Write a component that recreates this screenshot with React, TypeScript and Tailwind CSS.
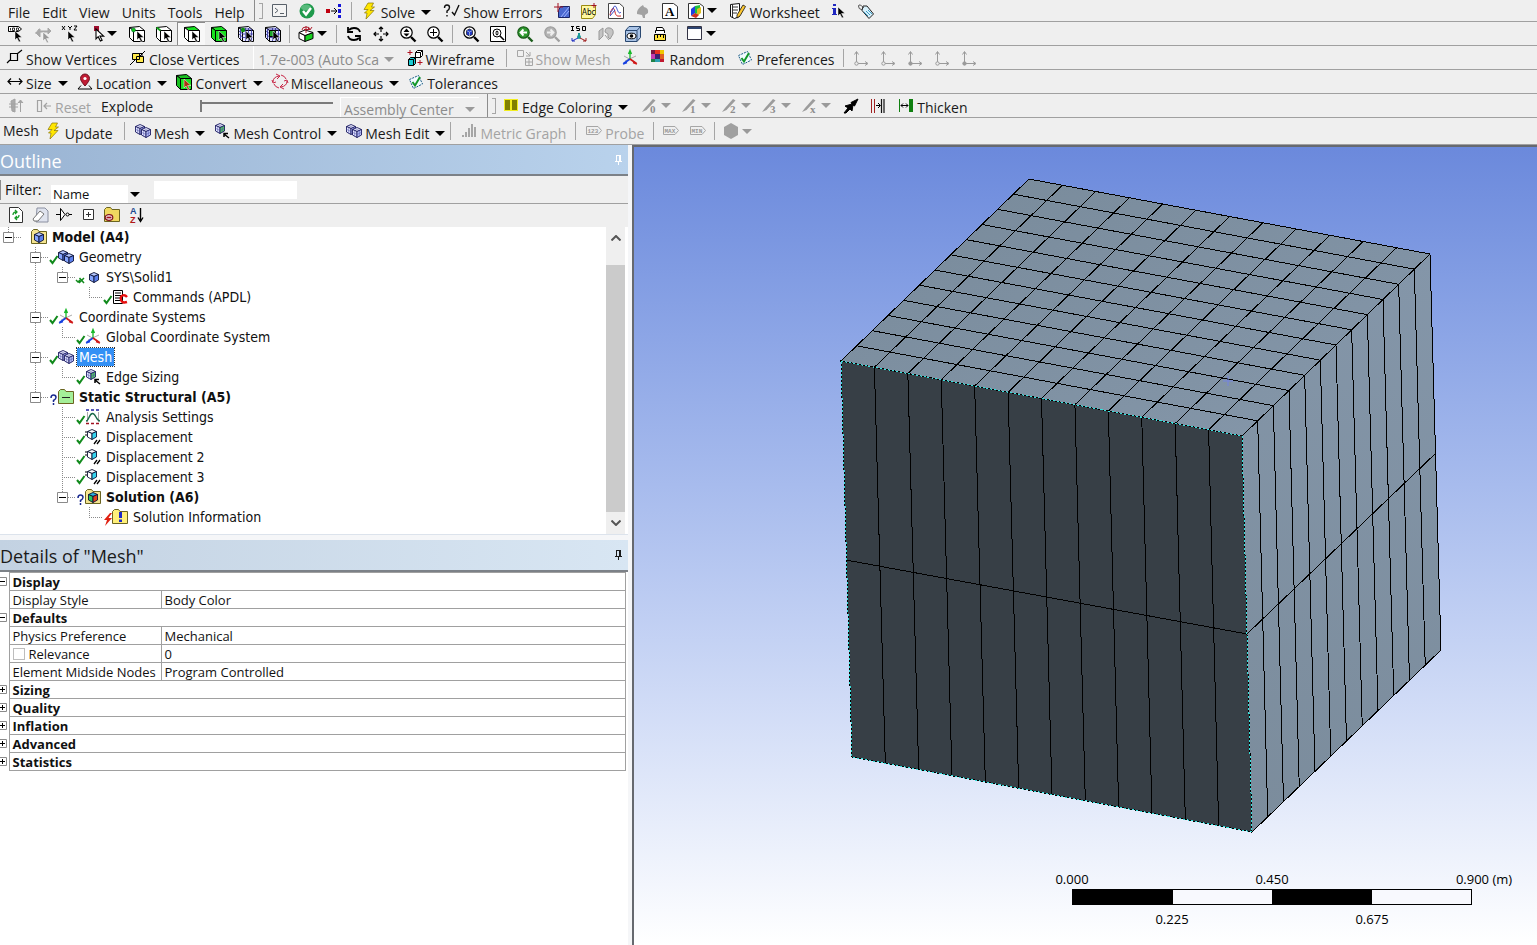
import React from 'react';
import clsx from 'clsx';

const CURSOR = 'M0 0v9l2-2 2 4 1.6-.8-2-3.7H7z';

const Cursor = ({ x, y, fill = '#000' }: { x: number; y: number; fill?: string }) => (
  <path d={CURSOR} transform={`translate(${x} ${y})`} fill={fill} stroke="#fff" strokeWidth=".5" />
);

interface CubeProps {
  x?: number;
  y?: number;
  front?: string;
  side?: string;
  top?: string;
  mesh?: boolean;
}

// Small isometric cube, 10x11 units
const MiniCube = ({ x = 0, y = 0, front = '#86a6ff', side = '#5b7fec', top = '#b5c8ff', mesh }: CubeProps) => (
  <g transform={`translate(${x} ${y})`} stroke={mesh ? '#1c1c60' : '#0c1236'} strokeWidth=".9" strokeLinejoin="round">
    <path d="M.5 2.500 5 .5l4.500 2L5 4.500z" fill={top} />
    <path d="M.5 2.500v5.500L5 10.500v-6z" fill={front} />
    <path d="M9.500 2.500v5.500L5 10.500v-6z" fill={side} />
    {mesh && <path d="M2.700 3.500v6M7.300 3.500v6M.5 5.300 5 7.500l4.500-2.200M2.700 1.500l4.600 2" stroke="#4a4aa8" strokeWidth=".5" fill="none" />}
  </g>
);

// Box seen from the front, used by the selection filters
const SelBox = ({ face = '#fff', edge = '#fff', side = edge, grid }: { face?: string; edge?: string; side?: string; grid?: boolean }) => (
  <g strokeLinejoin="round">
    <path d="M.5 1.500 10.500.5l5 4h-11z" fill={edge} stroke="#000" />
    <path d="M.5 1.500v10l4 4v-11z" fill={side} stroke="#000" />
    <path d="M4.500 4.500h11v11h-11z" fill={face} stroke="#000" />
    {grid && (
      <path d="M7.500 2v13M10.500 2v13M13.500 3v12M1 5l4 3h10M1 8l4 3.500h10M3 3h10M2.500 3v10" stroke="#2c2c9c" strokeWidth=".8" fill="none" />
    )}
  </g>
);

const Lens = ({ stroke = '#000', fill = '#fff' }: { stroke?: string; fill?: string }) => (
  <g>
    <circle cx="6.500" cy="6.500" r="5.700" fill={fill} stroke={stroke} strokeWidth="1.200" />
    <path d="m11 11 4.500 4.500" stroke={stroke} strokeWidth="2.400" />
  </g>
);

const Bolt = () => <path d="M6 0 2 6.500h4L2.500 10H5l-1 6 8-8.500H8L12.500 4H9.500L11.500 0z" fill="#ffe600" stroke="#8a7600" strokeWidth=".7" />;

const Triad = () => (
  <g strokeWidth="1.300" fill="none">
    <path d="m2 6 11 6M14 6 3 11" stroke="#888" strokeWidth=".7" />
    <path d="M8 9V1M6.500 4 8 .5 9.500 4" stroke="#18b828" />
    <path d="m8 9-6.500 4.500M1 14l4-1.500" stroke="#1640e0" strokeWidth="1.600" />
    <path d="m8 9 6.500 4.500M11 12.500l4 1.500" stroke="#d01818" strokeWidth="1.600" />
  </g>
);

const Folder = ({ fill = '#f4e490' }: { fill?: string }) => (
  <path d="M.5 14.500v-12l2-2h4l1.500 2h7.500v12z" fill={fill} stroke="#6b6420" />
);

const Check = () => (
  <g>
    <path d="m1.500 5.500 9-4 4 8.500-9 4.500z" fill="#f2fbff" stroke="#1b5c86" strokeDasharray="2 1" />
    <path d="m4.500 8 2.500 3.500L12 3" stroke="#12972a" strokeWidth="2" fill="none" />
  </g>
);

const MeshPair = () => (
  <g>
    <MiniCube x={0} y={1} mesh front="#e4e8ff" side="#b9c2f6" top="#f2f4ff" />
    <MiniCube x={6} y={4} mesh front="#e4e8ff" side="#b9c2f6" top="#f2f4ff" />
  </g>
);

const Slanted = ({ label }: { label: string }) => (
  <g>
    <path d="m0 14 3-4 8-9 2.500 1.500L4.500 12z" fill="#9c9c9c" />
    <text x="8" y="15" fontSize="11" fontFamily="Liberation Serif, serif" fontWeight="700" fill="#8e8e8e">{label}</text>
  </g>
);

const Axis = ({ filled }: { filled?: boolean }) => (
  <g stroke="#9a9a9a" fill="none">
    <path d="M3.500 13V2M1.500 4.500l2-3 2 3M4 13.500h10M12 11.500l3 2-3 2" />
    <circle cx="3.500" cy="13.500" r="1.700" fill={filled ? '#9a9a9a' : '#efefef'} />
  </g>
);

const Tag = ({ label }: { label: string }) => (
  <g>
    <path d="M.5 3.500H12l3.500 4-3.500 4H.5z" fill="none" stroke="#a6a6a6" />
    <text x="1.500" y="10" fontSize="6" fontFamily="Liberation Mono, monospace" fontWeight="700" fill="#999">{label}</text>
  </g>
);

const Displace = () => (
  <g>
    <MiniCube x={2} y={0} front="#fff" side="#35d4ee" top="#fff" />
    <path d="m9 15 3-4M12 15l3-4" stroke="#000" strokeWidth="1.300" />
    <path d="M0 3h2M0 6h2" stroke="#000" />
  </g>
);

const ICONS = {
  console: <path d="M.5 1.500h14v12H.5zM3 5l3 2.500L3 10M8 10.500h4" fill="#f4f4f4" stroke="#59616a" />,
  ok: (
    <g>
      <circle cx="8" cy="8" r="7.500" fill="#1f9a4c" />
      <ellipse cx="7" cy="4.500" rx="5" ry="3" fill="#7fd19c" opacity=".6" />
      <path d="m4 8 3 3.500L12 5" stroke="#fff" strokeWidth="2.400" fill="none" />
    </g>
  ),
  distribute: (
    <g>
      <path d="M0 6h4v4H0z" fill="#c00010" />
      <path d="M5 8h6M8 5l3 3-3 3" stroke="#000" fill="none" />
      <path d="M12 1h3v3h-3zM12 6h3v4h-3zM12 12h3v3h-3z" fill="#1515d8" />
    </g>
  ),
  bolt: <Bolt />,
  errors: (
    <g fill="none" stroke="#111" strokeWidth="1.400">
      <path d="M.5 5q0-3 2.500-3t2.500 2.500Q5.500 6.500 3 8v2M3 12v1.500M8 9l2.500 3L15 2" />
    </g>
  ),
  section: (
    <g>
      <path d="M6.500 3.500h9v11h-11v-7z" fill="#4a68d0" stroke="#1a2466" />
      <path d="m10 14 5-6M7 14l8-10" stroke="#9fb4ff" />
      <path d="M4 0v9M0 4h9" stroke="#a01020" />
    </g>
  ),
  abc: (
    <g>
      <path d="M.5 2.500h14v9l-3 4H.5z" fill="#fff8a0" stroke="#9a8a10" />
      <text x="1" y="12" fontSize="8" fontFamily="DejaVu Sans Condensed, sans-serif">Abc</text>
      <path d="M13 0v5M10.500 2.500h5" stroke="#a01020" />
    </g>
  ),
  chart: (
    <g fill="none">
      <path d="M.5.5h11l4 3.500v11.500H.5z" fill="#fff" stroke="#444" />
      <path d="M2 12c2-9 4-8 5-3s3 4 6 4" stroke="#d02020" />
      <path d="M2 9c3 0 3-6 5-6s3 10 6 6M2 13 7 7" stroke="#3848c8" />
    </g>
  ),
  leaf: <path d="M2 9q1-4 6-7l1 2q5 1 4 6l-3 2v3H8l-1-3-5-1z" fill="#a2a2a2" />,
  letterA: (
    <g>
      <path d="M.5.5h11l4 3v12H.5z" fill="#fff" stroke="#333" />
      <text x="3" y="13" fontSize="13" fontFamily="Liberation Serif, serif" fontWeight="700">A</text>
    </g>
  ),
  picture: (
    <g>
      <path d="M.5.5h11l4 3v12H.5z" fill="#fff" stroke="#333" />
      <path d="M3 6 7 3v7l-4 3z" fill="#2040e0" />
      <path d="m7 3 5-1v8l-5 1z" fill="#20c040" />
      <path d="m9 6 4-2v6l-4 3z" fill="#e0c020" />
      <path d="m3 13 4-3 4 2-3 3z" fill="#d03020" />
    </g>
  ),
  worksheet: (
    <g>
      <path d="M.5 1.500 9.500.5v13l-5 2-4-2z" fill="#fff" stroke="#111" />
      <path d="M3 4h5M3 7h5M3 10h4M2.500 1v13" stroke="#333" />
      <path d="m7 12 6-10 2.500 1.500L10 13l-3 2z" fill="#ffc830" stroke="#111" strokeWidth=".8" />
    </g>
  ),
  info: (
    <g>
      <path d="M2 1h3v2H2zM1 5h4v6h1v1H1v-1h1V6H1z" fill="#2028c0" />
      <Cursor x={7} y={4} />
    </g>
  ),
  tag: (
    <g>
      <path d="m5 3 4 0 6.500 8-4.500 4.500-7-8z" fill="#d6f0fb" stroke="#222" />
      <path d="M8 8l4 4M10 7l4 4M6 9l4 4" stroke="#3d9cc4" />
      <path d="M6 5Q1 0 .5 3t4 4" fill="none" stroke="#555" />
    </g>
  ),
  label: (
    <g>
      <path d="M.5.5h10l3 2.500-3 2.500H.5z" fill="#fff" stroke="#000" />
      <path d="M2.500 2v2.500M4.500 2h2v2.500h-2zM8.500 2h2v2.500h-2z" stroke="#000" fill="none" strokeWidth=".8" />
      <Cursor x={7} y={5} />
    </g>
  ),
  arrowsGray: (
    <g>
      <path d="M0 7h4M4 3 1 7l4 4V3zM5 5h8V2l3 3-3 3V6H5z" stroke="#a8a8a8" fill="#a8a8a8" />
      <Cursor x={8} y={6} fill="#999" />
    </g>
  ),
  xyz: (
    <g>
      <path d="m0 0 3 4M3 0 0 4M6 0l2 2 2-2M8 2v2M12 0h3l-3 4h3" stroke="#000" fill="none" />
      <Cursor x={6} y={5} />
    </g>
  ),
  pointer: (
    <g>
      <path d="M6 0h5v5H6z" fill="#a01030" />
      <path d={CURSOR} transform="translate(8 3) scale(1.100)" fill="#fff" stroke="#000" />
    </g>
  ),
  selVertex: <g><SelBox /><circle cx="4.500" cy="4" r="2" fill="#12c81c" stroke="#053" strokeWidth=".5" /><Cursor x={8} y={5} /></g>,
  selEdge: <g><SelBox /><path d="M.5 1.500 4.500 4.500" stroke="#12a01c" strokeWidth="2" /><Cursor x={8} y={5} /></g>,
  selFace: <g><SelBox edge="#18e020" side="#fff" /><Cursor x={8} y={5} /></g>,
  selBody: <g><SelBox face="#18e020" edge="#18e020" /><Cursor x={8} y={5} /></g>,
  selNode: <g><SelBox grid face="#e8eaff" edge="#e8eaff" /><circle cx="5" cy="4" r="2.200" fill="#109010" /><Cursor x={8} y={5} /></g>,
  selElem: <g><SelBox grid face="#dfe3ff" edge="#dfe3ff" /><path d="M4.500 4.500h6v6h-6z" fill="#18a828" stroke="#000" /><Cursor x={8} y={5} /></g>,
  extend: (
    <g>
      <path d="m7 9.500-6-3v6l6 3z" fill="#fff" stroke="#000" />
      <path d="m7 9.500 8-3v6l-8 3z" fill="#18d020" stroke="#000" />
      <path d="M1 6.500 7 4l8 2.500-8 3z" fill="#fff" stroke="#000" />
      <path d="M4 4Q4 1 8 1t4 2M10 2l2 2 2-3M8 0v7M6 3.500h5" stroke="#b02030" fill="none" />
    </g>
  ),
  rotate: <path d="M14 6Q13 2 8 2 5 2 3 4M2 1v5h5M2 10q1 4 6 4 3 0 5-2M14 15v-5H9" fill="none" stroke="#000" strokeWidth="1.800" />,
  pan: <path d="M8 1v5M8 10v5M1 8h5M10 8h5M6 3l2-2 2 2M6 13l2 2 2-2M3 6 1 8l2 2M13 6l2 2-2 2" fill="none" stroke="#000" strokeWidth="1.200" />,
  zoomDrag: <g><Lens /><path d="m3.500 6 3-3.500 3 3.500zM3.500 7.500l3 3 3-3z" /></g>,
  zoomIn: <g><Lens /><path d="M6.500 3v7M3 6.500h7" stroke="#000" /></g>,
  zoomFit: <g><Lens /><path d="M3.500 4.500 6.500 3l3 1.500v4l-3 1.500-3-1.500z" fill="#2038c8" stroke="#000" strokeWidth=".6" /><path d="M3.500 4.500l3 1.500 3-1.500M6.500 6v4" stroke="#bcd" strokeWidth=".7" fill="none" /></g>,
  zoomBox: (
    <g>
      <path d="M.5.5h15v15H.5z" fill="#fff" stroke="#000" />
      <circle cx="7" cy="7" r="4" fill="none" stroke="#000" />
      <path d="m10 10 4 4" stroke="#000" strokeWidth="1.600" />
      <path d="m5 6.500 2-2 2 2zM5 7.500l2 2 2-2z" />
    </g>
  ),
  zoomPrev: <g><Lens fill="#2f9a2f" stroke="#1a5c1a" /><path d="M10 6.500H4M6.500 3.500l-3 3 3 3" stroke="#fff" strokeWidth="1.800" fill="none" /></g>,
  zoomNext: <g><Lens fill="#b4b4b4" stroke="#a0a0a0" /><path d="M3 6.500h6M6.500 3.500l3 3-3 3" stroke="#eee" strokeWidth="1.800" fill="none" /></g>,
  iso: (
    <g>
      <path d="M0 .5h3M1.500 0v5M0 4.500h3M8.500.5H5.500v2h3v2h-3M11.500.5h3v4h-3z" stroke="#000" fill="none" />
      <path d="M8 7v5" stroke="#1a9a9a" strokeWidth="2" />
      <circle cx="8" cy="11" r="2" fill="#1a9a9a" />
      <path d="m7 12-6 3M1 12v3h3" stroke="#2030c0" fill="none" />
      <path d="m9 12 6 3M15 12v3h-3" stroke="#a02020" fill="none" />
    </g>
  ),
  lookAt: <path d="M1 5 5 2v8l-4 4zM7 6q0-5 5-4 4 1 3 6l-3 5-2-2V8z M7 9l4 5" fill="#c4c4c4" stroke="#999" />,
  eyeBox: (
    <g>
      <path d="M.5 4.500 4 .5h11.500v11l-3.500 4H.5z" fill="#a9c3e6" stroke="#2a4870" />
      <path d="M.5 4.500H12v11M12 4.500 15.500.5" fill="none" stroke="#2a4870" />
      <ellipse cx="6.500" cy="10" rx="4.500" ry="2.800" fill="#fff" stroke="#000" />
      <circle cx="6.500" cy="10" r="1.800" />
    </g>
  ),
  ruler: (
    <g>
      <path d="M2.500 8.500h11v6h-11z" fill="#ffe23a" stroke="#000" />
      <path d="M5.500 9v3M8.500 9v2M11.500 9v3" stroke="#000" />
      <path d="M3.500 7V4.500h9V7M4.500 4V1.500h6l2 3" fill="#fff" stroke="#000" />
    </g>
  ),
  window: <g><path d="M.5.5h14v13H.5z" fill="#fff" stroke="#334" /><path d="M1 1h13v2H1z" fill="#2d4470" /></g>,
  showVertices: <path d="M3.500 3.500h7v7h-7zM10 4l5-4M0 13l3-3" fill="none" stroke="#000" strokeWidth="1.200" />,
  closeVertices: (
    <g>
      <path d="M2.500 3.500h7v6h-7zM6.500 6.500h7v6h-7z" fill="#ffe94a" stroke="#000" />
      <path d="M9 7 15 1M0 15l7-7M6 3.500h6v3" stroke="#000" fill="none" />
    </g>
  ),
  wireframe: (
    <g>
      <path d="M8.500 2.500h5v5h-5zM8.500 2.500l2-2h5v5l-2 2M13.500 2.500l2-2" fill="#fff" stroke="#000" />
      <path d="M1.500 9.500h5v6h-5zM1.500 9.500l2-2h5v6l-2 2M6.500 9.500l2-2" fill="#19cbd4" stroke="#000" />
      <path d="M3 0v5M.5 2.500h5M13 10v5M10.500 12.500h5" stroke="#b01020" />
    </g>
  ),
  showMesh: <path d="M.5.5h6v6h-6zM9 2l4 4M13 2v4H9M8.500 8.500h7v7h-7zM12 9v6M9 12h6" fill="none" stroke="#a6a6a6" />,
  triad: <Triad />,
  random: (
    <g>
      <path d="M1 0h4v4H1z" fill="#7a1440" /><path d="M5 0h5v4H5z" fill="#e83020" /><path d="M10 0h4v4h-4z" fill="#f0c800" />
      <path d="M1 4h4v5H1z" fill="#c83cb0" /><path d="M5 4h5v5H5z" fill="#402070" /><path d="M10 4h4v5h-4z" fill="#e06020" />
      <path d="M1 9h4v3H1z" fill="#208048" /><path d="M5 9h5v3H5z" fill="#2aa0b0" /><path d="M10 9h4v3h-4z" fill="#c01830" />
    </g>
  ),
  check: <Check />,
  axis: <Axis />,
  axisFilled: <Axis filled />,
  size: <path d="M1 7.500h14M4 4.500l-3 3 3 3M12 4.500l3 3-3 3" fill="none" stroke="#000" strokeWidth="1.200" />,
  location: (
    <g>
      <path d="M8 12Q3.500 7 3.500 4.500a4.500 4.500 0 0 1 9 0Q12.500 7 8 12z" fill="#c01c34" stroke="#701020" />
      <circle cx="8" cy="4.500" r="1.600" fill="#fff" />
      <path d="M4 11.500 1 15h14l-3-3.500" fill="none" stroke="#000" />
    </g>
  ),
  convert: (
    <g>
      <SelBox face="#18e020" edge="#18c020" />
      <Cursor x={8} y={5} fill="#b03010" />
    </g>
  ),
  misc: <path d="M7 2Q1 3 1 8M4 0l4 2-3 3M9 13q6-1 6-6M12 15l-4-2 3-3M0 6l1 3 3-1M12 7l3-1 1 3M9 1q4 1 5 4M7 14Q3 13 2 10" fill="none" stroke="#c82848" />,
  explode: <path d="M3 3 7 1v13l-3-1zM1 6h9M1 9h9M12.500 14V3M10 5l2.500-3L15 5" fill="#aaa" stroke="#a2a2a2" />,
  reset: <path d="M1.500 2.500h4v11h-4zM8 8h7M11 5 8 8l3 3" fill="none" stroke="#a2a2a2" strokeWidth="1.200" />,
  edgeColoring: <g><path d="M1 1h14v12H1z" fill="#f2ee20" /><path d="M2 2h5v10H2zM9 2h5v10H9z" fill="#808000" /></g>,
  e0: <Slanted label="0" />,
  e1: <Slanted label="1" />,
  e2: <Slanted label="2" />,
  e3: <Slanted label="3" />,
  eX: <Slanted label="x" />,
  direction: <path d="m1 15 4-5-3-2 7-2-1-1.500L15 1l-3.500 7L10 7l-1 6-2-2-4 4z" fill="#000" stroke="#000" />,
  match: <g><path d="M1.500 1v14M4.500 1v14" stroke="#a02020" /><path d="M6 7.500h4M8 5l2.500 2.500L8 10" stroke="#000" fill="none" /><path d="M11.500 1v14M14 1v14" stroke="#111" strokeWidth="1.200" /></g>,
  thicken: <g><path d="M1.500 1v13" stroke="#108010" /><path d="M3 7.500h7M5 5.500l-2 2 2 2M8 5.500l2 2-2 2" stroke="#000" fill="none" /><path d="M11 1h4v13h-4z" fill="#108010" /></g>,
  meshPair: <MeshPair />,
  meshControl: (
    <g>
      <MiniCube x={1} y={0} mesh front="#e4e8ff" side="#54c860" top="#f2f4ff" />
      <path d="m15 15-5-4M10 14v-3.500h4" stroke="#000" strokeWidth="1.500" fill="none" />
    </g>
  ),
  metric: <path d="M1 14v-2h2v2zM4 14V9h2v5zM7 14V5h2v9zM10 14V1h2v13zM13 14V4h2v10z" fill="#a6a6a6" />,
  probe: <Tag label="123" />,
  max: <Tag label="MAX" />,
  min: <Tag label="MIN" />,
  hexagon: <path d="m8 0 7 4v8l-7 4-7-4V4z" fill="#a0a0a0" />,
  refresh: (
    <g fill="none">
      <path d="M1.500.5h9l4 4v11h-13z" fill="#fff" stroke="#333" />
      <path d="M5 8Q5 4.500 9 5M7 3l2 2-2 2M11 8q0 3.500-4 3M9 13l-2-2 2-2" stroke="#149a24" strokeWidth="1.300" />
    </g>
  ),
  eraser: (
    <g>
      <path d="M5 1h8l3 3v11H4z" fill="#dfe3ee" stroke="#8a8fa0" />
      <path d="m1 12 7-8 4 3-6 7H2z" fill="#fff" stroke="#777" />
    </g>
  ),
  gate: <g fill="#fff" stroke="#000"><path d="M0 7.500h4M4.500 1.500v12L9 7.500zM13 7.500h3" /><circle cx="11.500" cy="7.500" r="1.500" /></g>,
  expand: <path d="M3.500 2.500h10v10h-10zM8.500 5v5M6 7.500h5" fill="#fff" stroke="#333" />,
  noFolder: (
    <g>
      <Folder fill="#f0d860" />
      <ellipse cx="5" cy="10.500" rx="3.800" ry="2.800" fill="#fff" stroke="#801020" strokeWidth="1.200" />
      <path d="M2.500 10.500h5" stroke="#a01020" strokeWidth="1.800" />
    </g>
  ),
  sort: (
    <g>
      <text x="2" y="7" fontSize="9" fontWeight="700" fontFamily="Liberation Sans, sans-serif" fill="#1a4a90">A</text>
      <text x="2" y="16" fontSize="9" fontWeight="700" fontFamily="Liberation Sans, sans-serif" fill="#b01818">Z</text>
      <path d="M12.500 1v12M10 10.500l2.500 4 2.500-4" fill="none" stroke="#000" strokeWidth="1.400" />
    </g>
  ),
  model: <g><Folder /><MiniCube x={3} y={3} /></g>,
  geometry: <g><MiniCube x={0} y={1} /><MiniCube x={6} y={4} /></g>,
  solid: <MiniCube x={4} y={3} />,
  commands: (
    <g>
      <path d="M1.500 1.500h9v13h-9z" fill="#fff" stroke="#000" />
      <path d="M3 4h6M3 6.500h6M3 9h6M3 11.500h6" stroke="#000" />
      <path d="M15 8Q13 5.500 10.500 6.500t-1.500 4.500q1 3.500 6 2" fill="none" stroke="#e81010" strokeWidth="2.400" />
    </g>
  ),
  staticFolder: <g><Folder fill="#a4ef98" /><path d="M4 8.500h8" stroke="#222" /></g>,
  analysis: (
    <g fill="none">
      <path d="M2.500 3v10M13.500 3v10" stroke="#aaa" />
      <path d="M1 1h3M6 1h3M11 1h3" stroke="#2020a0" strokeWidth="1.500" />
      <path d="M1 14.500h3M6 14.500h3M11 14.500h3" stroke="#a01020" strokeWidth="1.500" />
      <path d="M1 12C4 12 4 4.500 7.500 4.500S11 12 15 12" stroke="#1b6a4a" strokeWidth="1.400" />
    </g>
  ),
  displace: <Displace />,
  solution: <g><Folder /><MiniCube x={3} y={3} front="#28c860" side="#e04020" top="#28b0e0" /></g>,
  solutionInfo: <g><Folder fill="#fff07a" /><path d="M7 3h3v6H7zM7 10.500h3v2.500H7z" fill="#1c28c8" /></g>,
};

type IconName = keyof typeof ICONS;

const Icon = ({ name }: { name: IconName }) => (
  <svg viewBox="0 0 16 16" className="size-4 shrink-0 overflow-visible" aria-hidden="true">{ICONS[name]}</svg>
);

const Arrow = ({ gray }: { gray?: boolean }) => (
  <svg viewBox="0 0 10 5" className={clsx('h-[5px] w-[10px] shrink-0', gray ? 'fill-[#9a9a9a]' : 'fill-black')} aria-hidden="true">
    <path d="M0 0h10L5 5z" />
  </svg>
);

interface ToolProps {
  icon: IconName;
  label?: string;
  menu?: boolean;
  off?: boolean;
  title?: string;
}

const Tool = ({ icon, label, menu, off }: ToolProps) => (
  <button type="button" disabled={off} className={clsx('flex shrink-0 items-center gap-[3px] pl-[7px]', menu ? 'pr-[2px]' : 'pr-[6px]', off && 'text-[#a3a3a3]')}>
    <Icon name={icon} />
    <span className="pt-[5px]">{label}</span>
    {menu && <span className="pt-1 pl-[3px]"><Arrow gray={off} /></span>}
  </button>
);

const IconTool = ({ icon, menu, off, title }: ToolProps) => (
  <button
    type="button"
    aria-label={title ?? icon}
    disabled={off}
    className={clsx('flex h-full shrink-0 items-center', menu ? 'w-10 gap-[3px] pl-[5px]' : 'w-[27px] justify-center')}
  >
    <Icon name={icon} />
    {menu && <Arrow gray={off} />}
  </button>
);

const Sep = () => (
  <div className="flex h-[18px] w-[7px] shrink-0 justify-center">
    <div className="w-px bg-[#a5a5a5]" />
  </div>
);

const Grip = () => (
  <div className="flex shrink-0 items-center gap-1 self-stretch">
    <div className="w-px self-stretch bg-[#8c8c8c]" />
    <div className="h-4 w-1 border-y border-r border-[#a5a5a5]" />
  </div>
);

const Bar = ({ children, className }: { children: React.ReactNode; className?: string }) => (
  <div className={clsx('flex items-center border-b border-[#a0a0a0] whitespace-nowrap', className ?? 'h-6')}>{children}</div>
);

const MENUS = ['File', 'Edit', 'View', 'Units', 'Tools', 'Help'];

const Toolbars = () => (
  <header className="overflow-hidden bg-[#efefef] text-[14px] leading-5 text-[#1a1a1a]">
    <Bar className="h-[22px]">
      <nav className="flex gap-3 pt-1 pr-[9px] pl-2">
        {MENUS.map((m) => (
          <button key={m} type="button">{m}</button>
        ))}
      </nav>
      <Grip />
      <div className="w-1" />
      <IconTool icon="console" />
      <IconTool icon="ok" />
      <IconTool icon="distribute" />
      <Sep />
      <Tool icon="bolt" label="Solve" menu />
      <div className="w-1" />
      <Tool icon="errors" label="Show Errors" />
      <IconTool icon="section" />
      <IconTool icon="abc" />
      <IconTool icon="chart" />
      <IconTool icon="leaf" off />
      <IconTool icon="letterA" />
      <IconTool icon="picture" menu />
      <Tool icon="worksheet" label="Worksheet" />
      <IconTool icon="info" />
      <IconTool icon="tag" />
    </Bar>

    <Bar>
      <div className="w-[2px]" />
      <IconTool icon="label" />
      <IconTool icon="arrowsGray" off />
      <IconTool icon="xyz" />
      <IconTool icon="pointer" menu />
      <IconTool icon="selVertex" />
      <IconTool icon="selEdge" />
      <div className="h-full border-t border-l border-[#8c8c8c] bg-[#f8f8f8]"><IconTool icon="selFace" /></div>
      <IconTool icon="selBody" />
      <IconTool icon="selNode" />
      <IconTool icon="selElem" />
      <Sep />
      <IconTool icon="extend" menu />
      <Sep />
      <IconTool icon="rotate" />
      <IconTool icon="pan" />
      <IconTool icon="zoomDrag" />
      <IconTool icon="zoomIn" />
      <div className="w-px" />
      <Sep />
      <div className="w-px" />
      <IconTool icon="zoomFit" />
      <IconTool icon="zoomBox" />
      <IconTool icon="zoomPrev" />
      <IconTool icon="zoomNext" off />
      <IconTool icon="iso" />
      <IconTool icon="lookAt" off />
      <IconTool icon="eyeBox" />
      <IconTool icon="ruler" />
      <div className="w-px" />
      <Sep />
      <div className="w-px" />
      <IconTool icon="window" menu />
    </Bar>

    <Bar>
      <Tool icon="showVertices" label="Show Vertices" />
      <Tool icon="closeVertices" label="Close Vertices" />
      <div className="ml-[7px] flex h-full w-[147px] items-center border-l border-white pt-1 pl-[5px]">
        <select disabled aria-label="Vertex tolerance" className="min-w-0 flex-1 appearance-none text-[#8c8c8c] opacity-100">
          <option>1.7e-003 (Auto Sca</option>
        </select>
        <Arrow gray />
        <div className="w-[6px]" />
      </div>
      <Tool icon="wireframe" label="Wireframe" />
      <div className="w-[2px]" />
      <Sep />
      <Tool icon="showMesh" label="Show Mesh" off />
      <IconTool icon="triad" />
      <Tool icon="random" label="Random" />
      <Tool icon="check" label="Preferences" />
      <Sep />
      <IconTool icon="axis" off />
      <IconTool icon="axis" off />
      <IconTool icon="axisFilled" off />
      <IconTool icon="axis" off />
      <IconTool icon="axisFilled" off />
    </Bar>

    <Bar>
      <Tool icon="size" label="Size" menu />
      <Tool icon="location" label="Location" menu />
      <Tool icon="convert" label="Convert" menu />
      <Tool icon="misc" label="Miscellaneous" menu />
      <Tool icon="check" label="Tolerances" />
    </Bar>

    <Bar>
      <div className="w-[2px]" />
      <IconTool icon="explode" off />
      <Tool icon="reset" label="Reset" off />
      <label htmlFor="explode" className="pt-[3px] pl-1">Explode</label>
      <input
        id="explode"
        type="range"
        defaultValue={0}
        className="mr-3 ml-[45px] h-4 w-[135px] appearance-none bg-[linear-gradient(#7a7a7a,#7a7a7a)] bg-[length:100%_2px] bg-[position:0_4px] bg-no-repeat [&::-webkit-slider-thumb]:h-3 [&::-webkit-slider-thumb]:w-1 [&::-webkit-slider-thumb]:appearance-none [&::-webkit-slider-thumb]:border-r-2 [&::-webkit-slider-thumb]:border-[#7a7a7a] [&::-webkit-slider-thumb]:bg-[#efefef]"
      />
      <div className="-ml-[5px] flex h-5 w-[139px] items-center self-end border-t border-l border-white pt-1 pl-[3px]">
        <select disabled aria-label="Explode center" className="min-w-0 flex-1 appearance-none text-[#8c8c8c] opacity-100">
          <option>Assembly Center</option>
        </select>
        <Arrow gray />
        <div className="w-1" />
      </div>
      <div className="w-2" />
      <Grip />
      <Tool icon="edgeColoring" label="Edge Coloring" menu />
      <div className="w-[7px]" />
      <IconTool icon="e0" menu off />
      <IconTool icon="e1" menu off />
      <IconTool icon="e2" menu off />
      <IconTool icon="e3" menu off />
      <IconTool icon="eX" menu off />
      <IconTool icon="direction" />
      <IconTool icon="match" />
      <Tool icon="thicken" label="Thicken" />
    </Bar>

    <Bar className="h-[27px]">
      <span className="pl-[3px]">Mesh</span>
      <Tool icon="bolt" label="Update" />
      <div className="w-[2px]" />
      <Sep />
      <Tool icon="meshPair" label="Mesh" menu />
      <Tool icon="meshControl" label="Mesh Control" menu />
      <Tool icon="meshPair" label="Mesh Edit" menu />
      <Sep />
      <Tool icon="metric" label="Metric Graph" off />
      <Sep />
      <Tool icon="probe" label="Probe" off />
      <Sep />
      <IconTool icon="max" off />
      <IconTool icon="min" off />
      <Sep />
      <IconTool icon="hexagon" menu off />
    </Bar>
  </header>
);

const Pin = () => (
  <svg viewBox="0 0 8 10" className="h-[10px] w-2" fill="none" stroke="currentColor" shapeRendering="crispEdges" aria-hidden="true">
    <path d="M1.500 6V.5h4V6M4.500 0v6M0 6.500h7M3.500 6v4" />
  </svg>
);

interface TreeNode {
  label: string;
  icon: IconName;
  // One character per indent level: "|" passes through, "T" branches, "L" ends, "^" is the root
  lines: string;
  open?: boolean;
  status?: 'ok' | 'hidden' | 'question' | 'bolt';
  bold?: boolean;
  selected?: boolean;
}

const TREE: TreeNode[] = [
  { label: 'Model (A4)', icon: 'model', lines: '^', open: true, bold: true },
  { label: 'Geometry', icon: 'geometry', lines: ' T', open: true, status: 'ok' },
  { label: 'SYS\\Solid1', icon: 'solid', lines: ' |L', open: true, status: 'hidden' },
  { label: 'Commands (APDL)', icon: 'commands', lines: ' | L', status: 'ok' },
  { label: 'Coordinate Systems', icon: 'triad', lines: ' T', open: true, status: 'ok' },
  { label: 'Global Coordinate System', icon: 'triad', lines: ' |L', status: 'ok' },
  { label: 'Mesh', icon: 'meshPair', lines: ' T', open: true, status: 'ok', selected: true },
  { label: 'Edge Sizing', icon: 'meshControl', lines: ' |L', status: 'ok' },
  { label: 'Static Structural (A5)', icon: 'staticFolder', lines: ' L', open: true, status: 'question', bold: true },
  { label: 'Analysis Settings', icon: 'analysis', lines: '  T', status: 'ok' },
  { label: 'Displacement', icon: 'displace', lines: '  T', status: 'ok' },
  { label: 'Displacement 2', icon: 'displace', lines: '  T', status: 'ok' },
  { label: 'Displacement 3', icon: 'displace', lines: '  T', status: 'ok' },
  { label: 'Solution (A6)', icon: 'solution', lines: '  L', open: true, status: 'question', bold: true },
  { label: 'Solution Information', icon: 'solutionInfo', lines: '   L', status: 'bolt' },
];

const Connector = ({ kind, open, last }: { kind: string; open?: boolean; last: boolean }) => (
  <svg viewBox={last ? '0 0 22 20' : '0 0 27 20'} className={clsx('h-5 shrink-0', last ? 'w-[22px]' : 'w-[27px]')} fill="none" aria-hidden="true">
    <g stroke="#8a8a8a" strokeDasharray="1 1">
      {kind !== ' ' && <path d={kind === '|' || kind === 'T' ? 'M8.500 0v20' : 'M8.500 0v10'} />}
      {last && <path d="M8 10.500h14" />}
    </g>
    {last && open && (
      <g>
        <path d="M3.500 5.500h10v10h-10z" fill="#fff" stroke="#8a8a8a" />
        <path d="M5 10.500h7" stroke="#000" />
      </g>
    )}
  </svg>
);

const Status = ({ status }: { status?: TreeNode['status'] }) => (
  <svg viewBox="0 0 9 20" className="h-5 w-[9px] shrink-0 overflow-visible" fill="none" aria-hidden="true">
    {status === 'ok' && <path d="m1 13 2.500 3L8.500 9" stroke="#118a1c" strokeWidth="2" />}
    {status === 'hidden' && <path d="m0 13 2 2 2-2M3 16l5-5M3.500 11l4.500 5" stroke="#118a1c" strokeWidth="1.500" />}
    {status === 'question' && <path d="M2 11q0-3 2.500-3T7 10.500Q7 12 4.500 13.500V15M4.500 16v2" stroke="#1a2a90" strokeWidth="1.500" />}
    {status === 'bolt' && <path d="m7 6-6 7h3l-2 6 7-8H5.500L9 6z" fill="#e02010" />}
  </svg>
);

const Outline = () => (
  <section className="mr-1">
    <div className="flex h-[31px] items-center justify-between border-b-2 border-[#7c8187] bg-linear-to-r from-[#9ab4d3] to-[#b9d2ec] pr-[5px] text-white">
      <h2 className="pt-[2px] text-[18px] leading-6">Outline</h2>
      <button type="button" aria-label="Pin outline"><Pin /></button>
    </div>
    <div className="flex h-[28px] items-center border-b border-[#a0a0a0] bg-[#efefef]">
      <div className="h-5 w-px bg-[#8c8c8c]" />
      <label htmlFor="filter" className="w-[50px] pl-1 text-[14px]">Filter:</label>
      <div className="flex h-[18px] w-[94px] items-center self-end bg-white">
        <select id="filter" className="w-[77px] appearance-none pl-[2px] text-[13px] leading-4">
          <option>Name</option>
        </select>
        <span className="flex h-full w-[17px] items-center bg-[#efefef] pl-[2px]"><Arrow /></span>
      </div>
      <input aria-label="Filter text" className="ml-[9px] h-[18px] w-[143px] bg-white" />
    </div>
    <div className="flex h-[23px] items-center gap-2 bg-[#efefef] pb-[2px] pl-2">
      {(['refresh', 'eraser', 'gate', 'expand', 'noFolder', 'sort'] as IconName[]).map((name) => (
        <button key={name} type="button" aria-label={name}><Icon name={name} /></button>
      ))}
    </div>
    <div className="flex h-[308px] border-b border-[#dce3ec] bg-white pr-[3px]">
      <ul className="min-w-0 flex-1 font-['DejaVu_Sans_Condensed','Open_Sans',sans-serif] text-[14px] leading-5">
        {TREE.map(({ label, icon, lines, open, status, bold, selected }) => (
          <li key={label} className="flex h-5 items-center">
            {lines.split('').map((kind, i) => (
              <Connector key={i} kind={kind} open={open} last={i === lines.length - 1} />
            ))}
            <Status status={status} />
            <Icon name={icon} />
            <span
              className={clsx(
                'ml-[3px] px-[2px] leading-[18px] whitespace-nowrap',
                bold && 'font-bold',
                selected && 'bg-[#3390f5] text-white outline-1 outline-dotted outline-[#333]'
              )}
            >
              {label}
            </span>
          </li>
        ))}
      </ul>
      <div className="flex w-[19px] flex-col items-center bg-[#efefef] text-[#555]">
        <svg viewBox="0 0 10 6" className="mt-2 mb-6 h-[6px] w-[10px]" fill="none" stroke="currentColor" strokeWidth="2"><path d="m.5 5.500 4.500-4.500 4.500 4.500" /></svg>
        <div className="w-full flex-1 bg-[#cbcbcb]" />
        <svg viewBox="0 0 10 6" className="my-2 h-[6px] w-[10px]" fill="none" stroke="currentColor" strokeWidth="2"><path d="m.5.5 4.500 4.500L9.500.5" /></svg>
      </div>
    </div>
  </section>
);

interface DetailGroup {
  title: string;
  rows?: { name: string; value: string; box?: boolean }[];
}

const DETAILS: DetailGroup[] = [
  { title: 'Display', rows: [{ name: 'Display Style', value: 'Body Color' }] },
  {
    title: 'Defaults',
    rows: [
      { name: 'Physics Preference', value: 'Mechanical' },
      { name: 'Relevance', value: '0', box: true },
      { name: 'Element Midside Nodes', value: 'Program Controlled' },
    ],
  },
  { title: 'Sizing' },
  { title: 'Quality' },
  { title: 'Inflation' },
  { title: 'Advanced' },
  { title: 'Statistics' },
];

const Details = () => (
  <section className="mr-1 flex-1 bg-white">
    <div className="flex h-[32px] items-center justify-between border-b-2 border-[#7c8187] bg-linear-to-r from-[#c3d2e2] to-[#d8e6f3] pr-[5px] text-[#1a1a1a]">
      <h2 className="pt-[2px] text-[18px] leading-6">Details of "Mesh"</h2>
      <button type="button" aria-label="Pin details"><Pin /></button>
    </div>
    <table className="w-[626px] table-fixed border-collapse text-left text-[13px] leading-4">
      <colgroup>
        <col className="w-[9px]" />
        <col className="w-[152px]" />
        <col />
      </colgroup>
      <tbody>
        {DETAILS.map(({ title, rows }) => (
          <React.Fragment key={title}>
            <tr className="h-[18px]">
              <td className="p-0">
                <button type="button" aria-label={title} className="flex">
                  <svg viewBox="0 0 7 9" className="h-[9px] w-[7px]" fill="none">
                    <path d="M0 .5h6.500v8H0" stroke="#8a8a8a" />
                    <path d={rows ? 'M0 4.500h5' : 'M0 4.500h5M2.500 2v5'} stroke="#000" />
                  </svg>
                </button>
              </td>
              <th colSpan={2} className="border border-[#a0a0a0] py-0 pl-[3px] font-bold">{title}</th>
            </tr>
            {rows?.map(({ name, value, box }) => (
              <tr key={name} className="h-[18px]">
                <td className="p-0" />
                <td className="border border-[#a0a0a0] py-0 pl-[3px] whitespace-nowrap">
                  {box ? (
                    <label className="flex items-center gap-1">
                      <input type="checkbox" className="size-3 appearance-none border border-[#bdbdbd] bg-white" />
                      {name}
                    </label>
                  ) : (
                    name
                  )}
                </td>
                <td className="border border-[#a0a0a0] py-0 pl-[3px]">{value}</td>
              </tr>
            ))}
          </React.Fragment>
        ))}
      </tbody>
    </table>
  </section>
);

type Point = [number, number];

const DIVISIONS = 12;

// Body corners, in viewport coordinates
const TOP_BACK: Point = [396, 34];
const TOP_RIGHT: Point = [797, 109];
const TOP_FRONT: Point = [609, 291];
const TOP_LEFT: Point = [208, 216];
const MID_LEFT: Point = [213, 415];
const MID_FRONT: Point = [614, 489];
const MID_RIGHT: Point = [803, 308];
const LOW_LEFT: Point = [219, 612];
const LOW_FRONT: Point = [619, 687];
const LOW_RIGHT: Point = [808, 505];

const poly = (...pts: Point[]) => `M${pts.map((p) => p.join(' ')).join('L')}`;

const lerp = (a: Point, b: Point, t: number): Point => [a[0] + (b[0] - a[0]) * t, a[1] + (b[1] - a[1]) * t];

// Lines joining edge a-b to edge c-d at every division
const rules = (a: Point, b: Point, c: Point, d: Point) =>
  Array.from({ length: DIVISIONS - 1 }, (_, i) => {
    const t = (i + 1) / DIVISIONS;
    return poly(lerp(a, b, t), lerp(c, d, t));
  }).join('');

const Viewport = () => (
  <main className="flex min-w-0 flex-1 flex-col overflow-hidden border-t-2 border-l-2 border-[#66696f] bg-linear-to-b from-[#6b89dc] to-white">
    <svg viewBox="1 2 903 710" className="w-full" fill="none" role="img" aria-label="Meshed solid body">
      <defs>
        <linearGradient id="top" x1="0" y1="0" x2="1" y2="1">
          <stop offset="0" stopColor="#788a9a" />
          <stop offset="1" stopColor="#8597aa" />
        </linearGradient>
        <linearGradient id="side" x1="0" y1="0" x2="0" y2="1">
          <stop offset="0" stopColor="#8496a9" />
          <stop offset="1" stopColor="#7b8c9c" />
        </linearGradient>
      </defs>
      <g shapeRendering="crispEdges" stroke="#000">
        <path d={`${poly(TOP_BACK, TOP_RIGHT, TOP_FRONT, TOP_LEFT)}Z`} fill="url(#top)" />
        <path d={`${poly(TOP_FRONT, TOP_RIGHT, LOW_RIGHT, LOW_FRONT)}Z`} fill="url(#side)" />
        <path d={`${poly(TOP_LEFT, TOP_FRONT, LOW_FRONT, LOW_LEFT)}Z`} fill="#373f46" />
        <path d={rules(TOP_LEFT, TOP_FRONT, TOP_BACK, TOP_RIGHT)} />
        <path d={rules(TOP_LEFT, TOP_BACK, TOP_FRONT, TOP_RIGHT)} />
        <path d={rules(TOP_LEFT, TOP_FRONT, LOW_LEFT, LOW_FRONT)} />
        <path d={rules(TOP_FRONT, TOP_RIGHT, LOW_FRONT, LOW_RIGHT)} />
        <path d={poly(MID_LEFT, MID_FRONT, MID_RIGHT)} />
        <path d={`${poly(TOP_LEFT, TOP_FRONT, LOW_FRONT, LOW_LEFT)}Z`} stroke="#35e0dc" strokeDasharray="2 2" />
      </g>
      <path d="M590 236h10M595 231v10" stroke="#7484e0" />
    </svg>
    <div className="mr-[15px] w-[500px] self-end pt-[14px] text-[13px] leading-4 text-black">
      <div className="grid grid-cols-5 text-center whitespace-nowrap">
        <span>0.000</span>
        <span className="col-start-3">0.450</span>
        <span className="col-start-5 pl-6">0.900 (m)</span>
      </div>
      <div className="mx-[50px] my-[2px] grid h-4 grid-cols-4 border border-black">
        <div className="bg-black" />
        <div className="bg-[#f8f9fe]" />
        <div className="bg-black" />
        <div className="bg-[#f8f9fe]" />
      </div>
      <div className="grid grid-cols-5 pt-1 text-center">
        <span className="col-start-2">0.225</span>
        <span className="col-start-4">0.675</span>
      </div>
    </div>
  </main>
);

export default function App() {
  return (
    <div className="flex min-h-screen flex-col bg-[#f5f6f8] font-['Open_Sans','Noto_Sans',sans-serif] text-[#111]">
      <Toolbars />
      <div className="flex flex-1">
        <aside className="flex w-[632px] shrink-0 flex-col gap-[5px]">
          <Outline />
          <Details />
        </aside>
        <Viewport />
      </div>
    </div>
  );
}
